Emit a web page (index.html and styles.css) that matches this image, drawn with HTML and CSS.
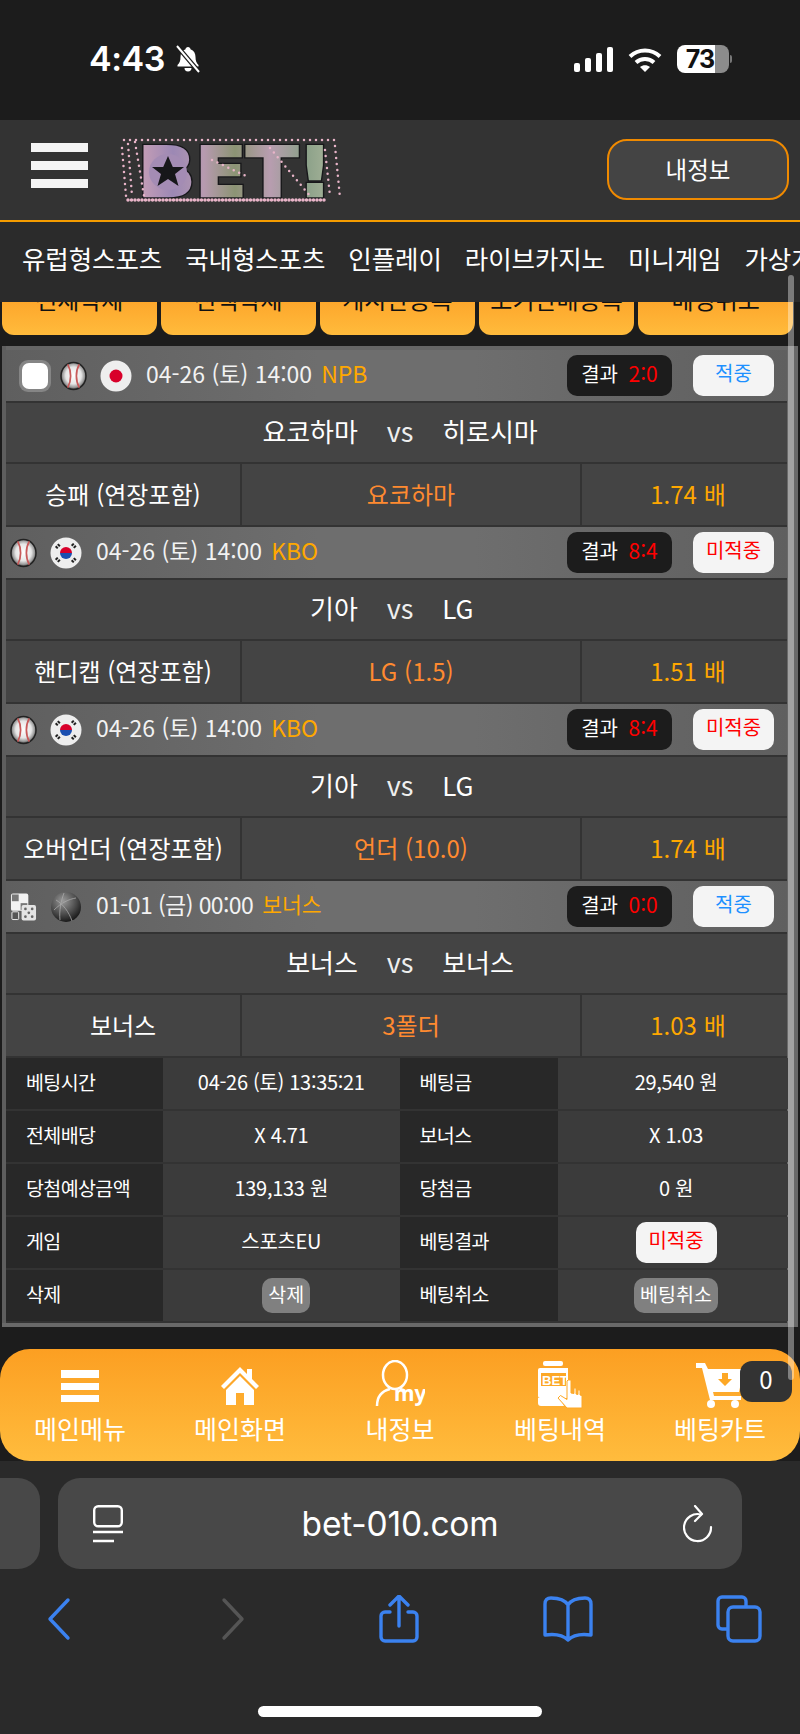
FILE: index.html
```html
<!DOCTYPE html>
<html lang="ko">
<head>
<meta charset="utf-8">
<title>베팅내역</title>
<link rel="stylesheet" href="styles.css">
</head>
<body>
<svg class="defs" aria-hidden="true">
  <defs>
    <radialGradient id="ballFill" cx="50%" cy="48%" r="52%">
      <stop offset="0" stop-color="#fff"/><stop offset=".6" stop-color="#e6e6e6"/><stop offset=".85" stop-color="#999"/><stop offset="1" stop-color="#333"/>
    </radialGradient>
    <radialGradient id="darkFill" cx="40%" cy="30%" r="75%">
      <stop offset="0" stop-color="#9a9a9a"/><stop offset=".6" stop-color="#4a4a4a"/><stop offset="1" stop-color="#111"/>
    </radialGradient>
    <linearGradient id="logoFill" gradientUnits="userSpaceOnUse" x1="18" x2="212" y1="0" y2="0">
      <stop offset="0" stop-color="#c9a0b6"/><stop offset=".18" stop-color="#9c88b4"/><stop offset=".34" stop-color="#b79ab0"/>
      <stop offset=".5" stop-color="#8c9474"/><stop offset=".68" stop-color="#b89db0"/><stop offset=".86" stop-color="#8aa088"/><stop offset="1" stop-color="#a8b49a"/>
    </linearGradient>
    <symbol id="ball" viewBox="0 0 28 30">
      <ellipse cx="14" cy="15" rx="13" ry="14" fill="url(#ballFill)" stroke="#222" stroke-width="1.5"/>
      <path d="M8 3c4 7 4 17 0 24M20 3c-4 7-4 17 0 24" fill="none" stroke="#c85a5a" stroke-width="1.8"/>
    </symbol>
    <symbol id="flag-jp" viewBox="0 0 32 32">
      <circle cx="16" cy="16" r="15.5" fill="#eee"/><circle cx="16" cy="16" r="6.5" fill="#d8002a"/>
    </symbol>
    <symbol id="flag-kr" viewBox="0 0 32 32">
      <circle cx="16" cy="16" r="15.5" fill="#eee"/>
      <path d="M10 16a6 6 0 0 1 12 0z" fill="#d8002a"/><path d="M10 16a6 6 0 0 0 12 0z" fill="#1b4fb0"/>
      <g stroke="#222" stroke-width="3" stroke-dasharray="2 1">
        <path d="M6 11l4-4M22 7l4 4M6 21l4 4M22 25l4-4"/>
      </g>
    </symbol>
    <symbol id="dice" viewBox="0 0 28 30">
      <rect x="1" y="1" width="18" height="18" rx="2" fill="#f2f2f2"/>
      <rect x="2" y="2" width="7" height="7" fill="#777"/><rect x="11" y="11" width="7" height="7" fill="#777"/>
      <rect x="2" y="20" width="7" height="8" rx="1" fill="#555" stroke="#eee"/>
      <rect x="12" y="13" width="15" height="16" rx="2" fill="#e4e4e4"/>
      <g fill="#666"><circle cx="16" cy="17" r="1.4"/><circle cx="23" cy="17" r="1.4"/><circle cx="19.500" cy="21" r="1.4"/><circle cx="16" cy="25" r="1.4"/><circle cx="23" cy="25" r="1.4"/></g>
    </symbol>
    <symbol id="darkball" viewBox="0 0 32 32">
      <circle cx="16" cy="16" r="15" fill="url(#darkFill)"/>
      <path d="M6 9c7 4 13 12 16 21M14 2c-3 8-5 18-4 27M26 7c-7 1-15 5-22 12" fill="none" stroke="#aaa" stroke-width=".8"/>
    </symbol>
  </defs>
</svg>

<div class="scrollbar"></div>

<header class="status">
  <div class="status-left">
    <span class="clock">4:43</span>
    <svg class="bell" viewBox="0 0 28 28" width="28" height="28">
      <path d="M14 2c-1.500 0-2.300 1-2.500 2.200C8 5.400 6.500 8.400 6.500 12c0 4-1 6-3 8v1.500h21V20c-2-2-3-4-3-8 0-3.600-1.500-6.600-5-7.800C16.300 3 15.500 2 14 2z" fill="#fff"/>
      <path d="M10.500 23a3.500 3.500 0 0 0 7 0z" fill="#fff"/>
      <path d="M3 1l22 26" stroke="#1c1c1c" stroke-width="4.500"/>
      <path d="M3 1l22 26" stroke="#fff" stroke-width="2"/>
    </svg>
  </div>
  <div class="status-right">
    <svg viewBox="0 0 39 25" width="39" height="25">
      <g fill="#fff"><rect x="0" y="16" width="6" height="9" rx="2"/><rect x="11" y="11" width="6" height="14" rx="2"/><rect x="22" y="6" width="6" height="19" rx="2"/><rect x="33" y="0" width="6" height="25" rx="2"/></g>
    </svg>
    <svg viewBox="0 0 34 25" width="34" height="25">
      <g fill="none" stroke="#fff" stroke-width="4">
        <path d="M2 9.500c8.500-8 21.500-8 30 0"/><path d="M8 15.500c5-4.600 13-4.600 18 0"/>
      </g>
      <path d="M12 20c3-2.500 7-2.500 10 0l-5 5z" fill="#fff"/>
    </svg>
    <div class="battery"><span class="battery-level">73</span></div>
  </div>
</header>

<div class="topbar">
  <div class="burger"><i></i><i></i><i></i></div>
  <svg class="logo" viewBox="0 0 223 69" width="223" height="69">
    <text class="logo-shadow" x="18" y="60" textLength="194" lengthAdjust="spacingAndGlyphs">BET!</text>
    <text class="logo-text" x="18" y="60" textLength="194" lengthAdjust="spacingAndGlyphs">BET!</text>
    <ellipse cx="48" cy="36" rx="19" ry="18" fill="#a48cb4"/>
    <path d="M48 20l4.800 11h11.200l-9 7 3.500 12L48 43l-10.500 7 3.500-12-9-7h11.200z" fill="#17171a"/>
    <g fill="none" stroke="#e8b4c8" stroke-linecap="round">
      <path class="petal-dense" d="M8 64H205"/>
      <path class="petal" d="M4 4H218"/>
      <path class="petal" d="M8 8 L12 60"/>
      <path class="petal" d="M2 12 L6 60"/>
      <path class="petal" d="M15 6 L24 60"/>
      <path class="petal" d="M215 10 L220 62"/>
      <path class="petal" d="M205 14 L210 60"/>
      <path class="petal" d="M150 12 L190 60"/>
      <path class="petal" d="M92 24 L126 40"/>
    </g>
  </svg>
  <button class="myinfo">내정보</button>
</div>

<nav class="menu">
  <a>유럽형스포츠</a><a>국내형스포츠</a><a>인플레이</a><a>라이브카지노</a><a>미니게임</a><a>가상게임</a>
</nav>

<main class="content">
  <div class="actions">
    <button>전체삭제</button><button>선택삭제</button><button>게시판등록</button><button>보기판매등록</button><button>베팅취소</button>
  </div>

  <section class="slip">
    <div class="match-head first">
      <span class="check"><i></i></span>
      <svg class="ic-ball"><use href="#ball"/></svg>
      <svg class="ic-flag"><use href="#flag-jp"/></svg>
      <span class="when">04-26 (토) 14:00</span><span class="league">NPB</span>
      <span class="score">결과 <b>2:0</b></span><span class="verdict hit">적중</span>
    </div>
    <div class="teams"><span>요코하마</span><em>vs</em><span>히로시마</span></div>
    <div class="market"><div>승패 (연장포함)</div><div class="pick">요코하마</div><div class="odds">1.74 배</div></div>

    <div class="match-head">
      <svg class="ic-ball"><use href="#ball"/></svg>
      <svg class="ic-flag"><use href="#flag-kr"/></svg>
      <span class="when">04-26 (토) 14:00</span><span class="league">KBO</span>
      <span class="score">결과 <b>8:4</b></span><span class="verdict miss">미적중</span>
    </div>
    <div class="teams"><span>기아</span><em>vs</em><span>LG</span></div>
    <div class="market"><div>핸디캡 (연장포함)</div><div class="pick">LG (1.5)</div><div class="odds">1.51 배</div></div>

    <div class="match-head">
      <svg class="ic-ball"><use href="#ball"/></svg>
      <svg class="ic-flag"><use href="#flag-kr"/></svg>
      <span class="when">04-26 (토) 14:00</span><span class="league">KBO</span>
      <span class="score">결과 <b>8:4</b></span><span class="verdict miss">미적중</span>
    </div>
    <div class="teams"><span>기아</span><em>vs</em><span>LG</span></div>
    <div class="market"><div>오버언더 (연장포함)</div><div class="pick">언더 (10.0)</div><div class="odds">1.74 배</div></div>

    <div class="match-head">
      <svg class="ic-ball"><use href="#dice"/></svg>
      <svg class="ic-flag"><use href="#darkball"/></svg>
      <span class="when narrow">01-01 (금) 00:00</span><span class="league small">보너스</span>
      <span class="score">결과 <b>0:0</b></span><span class="verdict hit">적중</span>
    </div>
    <div class="teams"><span>보너스</span><em>vs</em><span>보너스</span></div>
    <div class="market"><div>보너스</div><div class="pick">3폴더</div><div class="odds">1.03 배</div></div>

    <div class="details">
      <div class="label">베팅시간</div><div class="value">04-26 (토) 13:35:21</div><div class="label">베팅금</div><div class="value">29,540 원</div>
      <div class="label">전체배당</div><div class="value">X 4.71</div><div class="label">보너스</div><div class="value">X 1.03</div>
      <div class="label">당첨예상금액</div><div class="value">139,133 원</div><div class="label">당첨금</div><div class="value">0 원</div>
      <div class="label">게임</div><div class="value">스포츠EU</div><div class="label">베팅결과</div><div class="value"><span class="verdict miss">미적중</span></div>
      <div class="label">삭제</div><div class="value"><span class="mini shift">삭제</span></div><div class="label">베팅취소</div><div class="value"><span class="mini">베팅취소</span></div>
    </div>
  </section>
</main>

<nav class="dock">
  <a class="dock-item">
    <span class="dock-icon"><svg viewBox="0 0 40 46" width="40" height="46"><g fill="#fff"><rect x="1" y="8" width="38" height="8"/><rect x="1" y="21" width="38" height="7"/><rect x="1" y="33" width="38" height="7"/></g></svg></span>
    메인메뉴
  </a>
  <a class="dock-item">
    <span class="dock-icon"><svg viewBox="0 0 40 46" width="40" height="46"><g fill="#fff"><path d="M20 5 1 24l3 3L20 11l16 16 3-3-7-7V7h-5v5z"/><path d="M20 14 6 28v15h10V31h8v12h10V28z"/></g></svg></span>
    메인화면
  </a>
  <a class="dock-item">
    <span class="dock-icon"><svg viewBox="0 0 50 50" width="50" height="50"><g fill="none" stroke="#fff" stroke-width="2.500"><ellipse cx="20" cy="15" rx="12" ry="14"/><path d="M2 46c0-9 5-15 13-17M25 29c2 .4 4 1 5 2"/></g><text class="my" x="19" y="41">my</text></svg></span>
    내정보
  </a>
  <a class="dock-item">
    <span class="dock-icon"><svg viewBox="0 0 46 50" width="46" height="50"><g fill="#fff"><rect x="6" y="1" width="20" height="5" rx="2"/><path d="M3 8h28v30H3a2 2 0 0 1-2-2V10a2 2 0 0 1 2-2z"/><path d="M1 38h22l4 8H4a3 3 0 0 1-3-3z"/></g><rect x="3" y="12" width="27" height="15" fill="#fda826" stroke="#fff" stroke-width="2"/><text class="betmark" x="5" y="25">BET</text><path d="M31 20h3v13l3 .5V28h2v6l2 .5V30h2v5l2 .5V48H30l-9-10 2.500-2.500 6.500 4V21z" fill="#fff" stroke="#fda826"/></svg></span>
    베팅내역
  </a>
  <a class="dock-item">
    <span class="dock-icon"><svg viewBox="0 0 50 46" width="50" height="46"><g fill="#fff"><path d="M1 1h9l3 6h36l-5 23H18l1 4h27v4H15L7 6H1z"/><circle cx="16" cy="42" r="4"/><circle cx="40" cy="42" r="4"/></g><path d="M27 11v6h-4l7 7 7-7h-4v-6z" fill="#fda826"/></svg></span>
    베팅카트
  </a>
  <span class="cart-count">0</span>
</nav>

<footer class="browser">
  <div class="urlrow">
    <div class="tab-stub"></div>
    <div class="urlbar">
      <svg viewBox="0 0 30 38" width="30" height="38"><g fill="none" stroke="#fff" stroke-width="2.400"><rect x="1.200" y="1.200" width="27.600" height="20" rx="4"/><path d="M0 27h30M0 36h21"/></g></svg>
      <span class="host">bet-010.com</span>
      <svg viewBox="0 0 30 38" width="30" height="38"><g fill="none" stroke="#fff" stroke-width="2.200" stroke-linecap="round" stroke-linejoin="round"><path d="M18 9.500a13.500 13.500 0 1 0 10 12.500"/><path d="M12 1l7 8-7 7"/></g></svg>
    </div>
  </div>
  <div class="toolbar">
    <svg viewBox="0 0 46 48" width="46" height="48"><path d="M31 5 13 24l18 19" class="tb"/></svg>
    <svg viewBox="0 0 46 48" width="46" height="48"><path d="M18 5l18 19-18 19" class="tb off"/></svg>
    <svg viewBox="0 0 46 48" width="46" height="48"><path d="M15 17h-5a4 4 0 0 0-4 4v21a4 4 0 0 0 4 4h28a4 4 0 0 0 4-4V21a4 4 0 0 0-4-4h-5M24 31V2M15 10l9-9 9 9" class="tb"/></svg>
    <svg viewBox="0 0 50 48" width="50" height="48"><path d="M25 10C22 5 16 3 8 3 4 3 2 5 2 9v31c7-1 17-1 23 5 6-6 16-6 23-5V9c0-4-2-6-6-6-8 0-14 2-17 7zM25 10v35" class="tb"/></svg>
    <svg viewBox="0 0 46 48" width="46" height="48"><path d="M11 34H6a4 4 0 0 1-4-4V6a4 4 0 0 1 4-4h20a4 4 0 0 1 4 4v5" class="tb"/><rect x="12" y="12" width="32" height="34" rx="5" class="tb"/></svg>
  </div>
  <div class="home"></div>
</footer>
</body>
</html>
```

FILE: styles.css
```css
* { box-sizing: border-box; }
html, body { margin: 0; padding: 0; }
body {
  position: relative;
  width: 800px;
  height: 1734px;
  overflow: hidden;
  display: flex;
  flex-direction: column;
  background: #1c1c1c;
  color: #fff;
  font-family: "Noto Sans CJK KR", "Noto Sans", sans-serif;
}
.defs { display: block; width: 0; height: 0; overflow: hidden; flex: none; }

.scrollbar {
  position: absolute;
  left: 788px;
  top: 275px;
  width: 6px;
  height: 1105px;
  border-radius: 3px;
  background: rgba(255, 255, 255, .38);
  z-index: 5;
}

.status {
  height: 120px;
  flex: none;
  display: flex;
  justify-content: space-between;
  padding: 45px 71px 0 89px;
}
.status-left { display: flex; align-items: flex-start; gap: 9px; }
.clock { font-family: Inter, sans-serif; font-weight: 600; font-size: 34px; line-height: 28px; letter-spacing: -.5px; }
.status-right { display: flex; align-items: flex-start; gap: 15px; padding-top: 2px; }
.battery {
  position: relative;
  width: 52px;
  height: 28px;
  margin-top: -2px;
  border-radius: 8px;
  background: linear-gradient(90deg, #fff 0 73%, #8c8c8c 73%);
  color: #111;
  font: 700 25px/28px Inter, sans-serif;
  letter-spacing: -1px;
  text-align: center;
  padding-right: 6px;
}
.battery::after {
  content: "";
  position: absolute;
  left: 53px;
  top: 10px;
  width: 2px;
  height: 8px;
  border-radius: 0 2px 2px 0;
  background: #777;
}

.topbar {
  height: 102px;
  flex: none;
  display: flex;
  align-items: center;
  background: #333;
  border-bottom: 2px solid #f59c00;
  padding: 0 11px 4px 31px;
}
.burger { width: 57px; display: flex; flex-direction: column; gap: 9px; margin-bottom: 5px; }
.burger i { display: block; height: 9px; background: #f4f4f4; }
.logo { margin: 5px 0 0 32px; }
.logo-text, .logo-shadow { font: 700 68px "DejaVu Sans", sans-serif; }
.logo-text { fill: url(#logoFill); stroke: url(#logoFill); stroke-width: 2.500px; }
.logo-shadow { fill: #17171a; stroke: #17171a; stroke-width: 5px; }
.petal { stroke-width: 2.500px; stroke-dasharray: 0 6; }
.petal-dense { stroke-width: 3.500px; stroke-dasharray: 0 3.500; }
.myinfo {
  margin: 2px 0 0 auto;
  width: 182px;
  height: 61px;
  border: 2.500px solid #f08a00;
  border-radius: 20px;
  background: #444;
  color: #fff;
  font: 400 23.500px "Noto Sans CJK KR", sans-serif;
  padding: 0;
}

.menu {
  height: 80px;
  flex: none;
  display: flex;
  align-items: center;
  gap: 23px;
  padding: 0 0 10px 22px;
  background: #2b2b2b;
  white-space: nowrap;
  overflow: hidden;
  font-size: 25.500px;
  letter-spacing: -.1px;
  position: relative;
  z-index: 2;
}

.content { flex: 1; min-height: 0; }
.actions {
  height: 33px;
  display: flex;
  align-items: flex-end;
  gap: 4.500px;
  margin: 0 7px 11px 2px;
  overflow: hidden;
}
.actions button {
  flex: 1;
  height: 74px;
  border: 0;
  border-radius: 0 0 12px 12px;
  padding: 0;
  background: linear-gradient(#fda52a 50%, #ffbb3c);
  color: #111;
  font: 400 24px "Noto Sans CJK KR", sans-serif;
  white-space: nowrap;
}

.slip {
  margin: 0 2px;
  padding: 4px 10px 2px 4px;
  height: 981px;
  background: #333;
  border: solid #696969;
  border-width: 0 1px 4px 0;
  box-shadow: inset 4px 0 0 #5e5e5e, inset -10px 0 0 #696969, inset 0 4px 0 #666;
  display: flex;
  flex-direction: column;
  gap: 2px;
}
.match-head {
  height: 51px;
  flex: none;
  display: flex;
  align-items: center;
  padding: 0 13px 0 4px;
  background: linear-gradient(90deg, #5f5f5f, #6e6e6e 40%, #6e6e6e 60%, #5f5f5f);
  font-size: 23px;
  white-space: nowrap;
}
.check {
  width: 32px;
  height: 32px;
  margin: 0 9px 0 9px;
  padding: 3px;
  border-radius: 9px;
  background: #858585;
}
.check i { display: block; height: 100%; border-radius: 7px; background: #fff; }
.ic-ball { width: 27px; height: 30px; flex: none; }
.ic-flag { width: 32px; height: 32px; margin: 0 14px 0 13px; flex: none; }
.when { color: #f2f2f2; margin-bottom: 6px; }
.when.narrow { letter-spacing: -.6px; }
.league { margin: 0 0 6px 9px; color: #ffa800; }
.league.small { font-size: 21.500px; }
.score {
  margin-left: auto;
  width: 105px;
  height: 41px;
  border-radius: 10px;
  background: #1c1c1c;
  text-align: center;
  font-size: 20px;
  line-height: 36px;
  color: #fff;
}
.score b { font-weight: 400; color: #f00; margin-left: 5px; font-size: 21px; }
.verdict {
  display: inline-block;
  width: 81px;
  height: 41px;
  border-radius: 10px;
  background: #f4f4f4;
  text-align: center;
  font-size: 20px;
  line-height: 36px;
}
.match-head .verdict { margin-left: 21px; }
.hit { color: #1e90ff; }
.miss { color: #f00; }

.teams {
  height: 59px;
  flex: none;
  display: grid;
  grid-template-columns: 1fr auto 1fr;
  align-items: center;
  column-gap: 29px;
  padding: 0 0 4px 7px;
  background: #444;
  font-size: 26px;
  letter-spacing: -.1px;
}
.teams span:first-child { text-align: right; }
.teams em { font-style: normal; font-size: 27px; color: #eee; }
.market {
  height: 61px;
  flex: none;
  display: grid;
  grid-template-columns: 234px 338px 1fr;
  gap: 2px;
  font-size: 24px;
}
.market div { display: flex; align-items: center; justify-content: center; background: #444; padding-bottom: 2px; white-space: pre; }
.market .pick { color: #ff8a30; }
.market .odds { color: #ffa800; padding-left: 7px; }

.details {
  display: grid;
  grid-template-columns: 157px 236.500px 158.500px 230px;
  grid-auto-rows: 51px;
  row-gap: 2px;
  font-size: 20px;
}
.details > div { display: flex; align-items: center; padding-bottom: 4px; }
.label { background: #282828; padding-left: 20px; font-size: 19.500px; letter-spacing: -.6px; }
.value { justify-content: center; background: #3b3b3b; letter-spacing: -.3px; }
.value:nth-child(4n) { padding-left: 6px; }
.mini {
  height: 35px;
  margin-bottom: -4px;
  padding: 0 6px;
  border-radius: 10px;
  background: #808080;
  line-height: 32px;
  letter-spacing: 0;
  font-size: 19.500px;
}
.mini.shift { margin-left: 10px; }
.details .verdict { margin-bottom: -4px; letter-spacing: 0; }

.dock {
  position: relative;
  height: 112px;
  flex: none;
  display: grid;
  grid-template-columns: repeat(5, 1fr);
  border-radius: 30px;
  background: linear-gradient(#fc9f22, #ffbc3d);
  font-size: 25px;
}
.dock-item { display: flex; flex-direction: column; align-items: center; padding-top: 11px; line-height: 36px; }
.dock-icon { height: 50px; display: flex; align-items: center; justify-content: center; }
.my { font: 700 21px "Noto Sans", sans-serif; fill: #fff; }
.betmark { font: 700 13px "Liberation Sans", sans-serif; fill: #fff; }
.cart-count {
  position: absolute;
  left: 740px;
  top: 12px;
  width: 52px;
  height: 41px;
  border-radius: 12px;
  background: #333;
  text-align: center;
  font-size: 24px;
  line-height: 36px;
}

.browser {
  height: 273px;
  flex: none;
  background: #2a2a2a;
  padding-top: 17px;
}
.urlrow { display: flex; gap: 18px; }
.tab-stub { width: 40px; height: 91px; background: #484848; border-radius: 0 22px 22px 0; }
.urlbar {
  width: 684px;
  height: 91px;
  display: flex;
  align-items: center;
  justify-content: space-between;
  padding: 0 29px 0 35px;
  border-radius: 22px;
  background: #484848;
}
.host { font: 400 33.500px Inter, sans-serif; letter-spacing: -.2px; margin-right: 6px; }
.toolbar {
  display: flex;
  justify-content: space-between;
  align-items: center;
  padding: 26px 38px 0 37px;
}
.tb { fill: none; stroke: #3b82f0; stroke-width: 3.400px; stroke-linecap: round; stroke-linejoin: round; }
.tb.off { stroke: #555; }
.home {
  width: 284px;
  height: 11px;
  margin: 63px auto 0;
  border-radius: 6px;
  background: #fff;
}
```
